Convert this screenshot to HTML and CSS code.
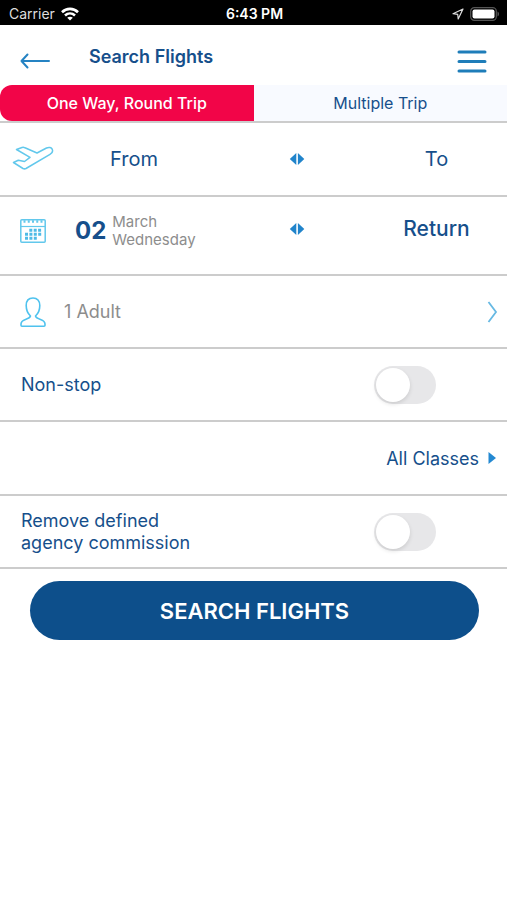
FILE: index.html
```html
<!DOCTYPE html>
<html lang="en">
<head>
<meta charset="utf-8">
<meta name="viewport" content="width=device-width, initial-scale=1">
<title>Search Flights</title>
<link rel="stylesheet" href="styles.css">
</head>
<body>
<div class="status">
  <div class="carrier">
    <span>Carrier</span>
    <svg width="18" height="14" viewBox="0 0 18 14" fill="none" stroke="#fff" stroke-width="2.6" aria-hidden="true">
      <path d="M1 5.2C5.5.8 12.500.8 17 5.200"/>
      <path d="M4 8.500c2.900-2.700 7.100-2.700 10 0"/>
      <path d="M9 13.600 6.200 10.800c1.600-1.400 4-1.400 5.600 0z" fill="#fff" stroke="none"/>
    </svg>
  </div>
  <span class="clock">6:43 PM</span>
  <div class="indicators">
    <svg width="12" height="12" viewBox="0 0 12 12" fill="none" stroke="#ddd" stroke-width="1.200" stroke-linejoin="round" aria-hidden="true"><path d="M11 1 1 5.700l4.700.6.500 4.700z"/></svg>
    <svg width="30" height="14" viewBox="0 0 30 14" aria-hidden="true">
      <rect x=".7" y=".7" width="25.600" height="12.600" rx="3.600" fill="none" stroke="#555" stroke-width="1.200"/>
      <rect x="2.500" y="2.500" width="22" height="9" rx="2" fill="#fff"/>
      <path d="M27.500 4.500c2 .8 2 4.200 0 5z" fill="#555"/>
    </svg>
  </div>
</div>

<header class="header">
  <button class="icon-button" type="button" aria-label="Back">
    <svg width="30" height="16" viewBox="0 0 30 16" fill="none" stroke="#2583c3" stroke-width="2" stroke-linecap="round" stroke-linejoin="round"><path d="M29 8H1.500M7.500 1.500 1.500 8l6 6.500"/></svg>
  </button>
  <h1>Search Flights</h1>
  <button class="icon-button" type="button" aria-label="Menu">
    <svg width="30" height="24" viewBox="0 0 30 24" stroke="#1e7db9" stroke-width="3" stroke-linecap="round"><path d="M2 3h26M2 12.500h26M2 22h26"/></svg>
  </button>
</header>

<main>
  <nav class="tabs" aria-label="Trip type">
    <button class="tab active" type="button">One Way, Round Trip</button>
    <button class="tab" type="button">Multiple Trip</button>
  </nav>

  <form>
    <div class="row route">
      <svg class="plane" width="42" height="26" viewBox="0 0 42 26" fill="none" stroke="#62c8ec" stroke-width="1.500" stroke-linejoin="round" aria-hidden="true">
        <path d="M4.500 3.500 10 1.500c1-.3 2-.2 3 .3l12 5.200L34.500 2c2.500-1.100 5-.5 5.800 1.400.7 1.800-.2 3.800-2.300 5L14 22.500c-1 .5-2 .5-3 0L1.500 16.500l4.800-2.200 6.200 1.200 5.500-4.200z"/>
      </svg>
      <button class="place" type="button">From</button>
      <button class="swap" type="button" aria-label="Swap places"><svg width="16" height="12" viewBox="0 0 16 12" fill="#2184cb"><path d="M7.300 0v12L.8 6zM8.900 0v12l6.400-6z"/></svg></button>
      <button class="place target" type="button">To</button>
    </div>

    <div class="row route dates">
      <svg class="calendar" width="26" height="24" viewBox="0 0 26 24" fill="none" stroke="#62c8ec" aria-hidden="true">
        <rect x=".8" y=".8" width="24.400" height="22.400" rx="1" stroke-width="1.500"/>
        <path d="M1 7.500h24" stroke-width="1.200"/>
        <path d="M3.500 2.500h19" stroke-width="2.500" stroke-dasharray="2 2.250"/>
        <path d="M9.300 11.300h13M5 15.300h17M5 19.300h12.500" stroke="#4fbbe6" stroke-width="3" stroke-dasharray="3 1.400"/>
      </svg>
      <button class="date" type="button">
        <strong>02</strong>
        <span>March<br>Wednesday</span>
      </button>
      <button class="swap" type="button" aria-label="Swap dates"><svg width="16" height="12" viewBox="0 0 16 12" fill="#2184cb"><path d="M7.300 0v12L.8 6zM8.900 0v12l6.400-6z"/></svg></button>
      <button class="place target return" type="button">Return</button>
    </div>

    <button class="row passengers" type="button">
      <svg width="26" height="30" viewBox="0 0 26 30" fill="none" stroke="#4fc2ee" stroke-width="1.600" stroke-linejoin="round" aria-hidden="true">
        <path d="M13 1C8.700 1 6.200 4 6.200 8.500c0 4.200 1.500 8 4.300 10.500-.5 1.800-2.500 2.600-5 3.400C2.500 23.400 1 24.800 1 27v1.200c0 .6.400 1 1 1h22c.6 0 1-.4 1-1V27c0-2.200-1.500-3.600-4.500-4.600-2.500-.8-4.500-1.600-5-3.400 2.800-2.500 4.300-6.300 4.300-10.500C19.800 4 17.300 1 13 1z"/>
      </svg>
      <span>1 Adult</span>
      <svg width="11" height="22" viewBox="0 0 11 22" fill="none" stroke="#67b9e3" stroke-width="1.800" aria-hidden="true"><path d="m1.500 1 7.500 10-7.500 10"/></svg>
    </button>

    <div class="row option">
      <label for="nonstop">Non-stop</label>
      <input class="switch" id="nonstop" type="checkbox" role="switch">
    </div>

    <button class="row classes" type="button">
      <span>All Classes</span>
      <svg width="8" height="12" viewBox="0 0 8 12" fill="#2489d2" aria-hidden="true"><path d="M.5 0v12L8 6z"/></svg>
    </button>

    <div class="row option">
      <label for="commission">Remove defined<br>agency commission</label>
      <input class="switch" id="commission" type="checkbox" role="switch">
    </div>

    <button class="search" type="button">SEARCH FLIGHTS</button>
  </form>
</main>
</body>
</html>
```
FILE: styles.css
```css
* {
  box-sizing: border-box;
}

body {
  margin: 0;
  background: #fff;
  color: #164f8b;
  font-family: Inter, "Liberation Sans", sans-serif;
  font-size: 18px;
}

button {
  margin: 0;
  padding: 0;
  border: 0;
  background: none;
  color: inherit;
  font: inherit;
  cursor: pointer;
}

svg {
  display: block;
  flex: none;
}

.status {
  display: grid;
  grid-template-columns: 1fr auto 1fr;
  align-items: center;
  height: 25px;
  padding: 2px 7px 0 9px;
  background: #000;
  color: #fff;
  font-size: 14px;
}

.carrier,
.indicators {
  display: flex;
  align-items: center;
  gap: 6px;
}

.carrier {
  color: #ddd;
}

.clock {
  font-weight: 600;
}

.indicators {
  justify-content: flex-end;
}

.header {
  display: flex;
  align-items: center;
  height: 60px;
  padding: 12px 20px 0;
}

h1 {
  flex: 1;
  margin: 0;
  padding: 0 0 10px 39px;
  font-size: 18px;
  font-weight: 600;
}

.tabs {
  display: grid;
  grid-template-columns: 1fr 1fr;
  border-bottom: 2px solid #ccc;
}

.tab {
  height: 36px;
  background: #f8faff;
  font-size: 16px;
}

.tab.active {
  border-radius: 12px 0 0 12px;
  background: #f20548;
  color: #fff;
  font-weight: 500;
}

.row {
  display: flex;
  align-items: center;
  width: 100%;
  height: 73px;
  border-bottom: 2px solid #ccc;
}

.route {
  display: grid;
  grid-template-columns: 64px 140px 1fr 117px;
  height: 74px;
}

.dates {
  height: 79px;
  padding-bottom: 10px;
}

.plane {
  margin-left: 12px;
}

.calendar {
  margin-left: 20px;
}

.place {
  font-size: 20px;
}

.target {
  padding-right: 24px;
}

.return {
  font-size: 21px;
  font-weight: 500;
}

.dates .swap,
.dates .target {
  padding-bottom: 4px;
}

.swap {
  justify-self: center;
}

.date {
  display: flex;
  align-items: center;
  gap: 6px;
  padding-left: 11px;
  text-align: left;
}

.date strong {
  font-size: 24px;
  font-weight: 700;
}

.date span {
  color: #8d8d8d;
  font-size: 15px;
  line-height: 18px;
}

.passengers {
  height: 73px;
  padding: 0 9px 0 20px;
  gap: 18px;
  color: #8d8d8d;
  text-align: left;
}

.passengers span {
  flex: 1;
}

.option {
  justify-content: space-between;
  padding: 0 71px 0 21px;
  line-height: 22px;
}

.classes {
  height: 74px;
  justify-content: flex-end;
  gap: 9px;
  padding-right: 11px;
}

.switch {
  display: flex;
  flex: none;
  align-items: center;
  width: 62px;
  height: 38px;
  margin: 0;
  padding: 2px;
  border-radius: 19px;
  background: #e7e7e9;
  appearance: none;
  cursor: pointer;
}

.switch::before {
  width: 34px;
  height: 34px;
  border-radius: 50%;
  background: #fff;
  box-shadow: 0 2px 4px rgba(0, 0, 0, 0.12);
  content: "";
}

.switch:checked {
  justify-content: flex-end;
  background: #0d4f8b;
}

.search {
  display: block;
  width: calc(100% - 58px);
  height: 59px;
  margin: 12px 28px 0 30px;
  border-radius: 30px;
  background: #0d4f8b;
  color: #fff;
  font-size: 22px;
  font-weight: 600;
}
```
